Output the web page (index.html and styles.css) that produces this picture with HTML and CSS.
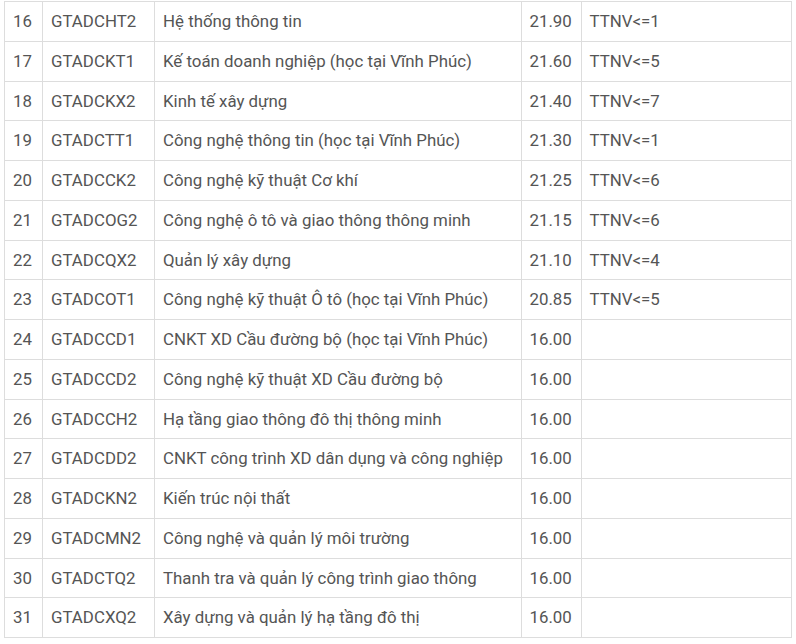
FILE: index.html
```html
<!DOCTYPE html>
<html lang="vi">
<head>
    <meta charset="UTF-8">
    <meta name="viewport" content="width=device-width, initial-scale=1.0">
    <title>Điểm chuẩn</title>
    <link rel="stylesheet" href="styles.css">
</head>
<body>
    <div class="wrap">
        <table class="scores">
            <colgroup>
                <col class="c-no">
                <col class="c-code">
                <col class="c-name">
                <col class="c-score">
                <col class="c-note">
            </colgroup>
            <tbody>
                <tr><td>16</td><td>GTADCHT2</td><td>Hệ thống thông tin</td><td>21.90</td><td>TTNV&lt;=1</td></tr>
                <tr><td>17</td><td>GTADCKT1</td><td>Kế toán doanh nghiệp (học tại Vĩnh Phúc)</td><td>21.60</td><td>TTNV&lt;=5</td></tr>
                <tr><td>18</td><td>GTADCKX2</td><td>Kinh tế xây dựng</td><td>21.40</td><td>TTNV&lt;=7</td></tr>
                <tr><td>19</td><td>GTADCTT1</td><td>Công nghệ thông tin (học tại Vĩnh Phúc)</td><td>21.30</td><td>TTNV&lt;=1</td></tr>
                <tr><td>20</td><td>GTADCCK2</td><td>Công nghệ kỹ thuật Cơ khí</td><td>21.25</td><td>TTNV&lt;=6</td></tr>
                <tr><td>21</td><td>GTADCOG2</td><td>Công nghệ ô tô và giao thông thông minh</td><td>21.15</td><td>TTNV&lt;=6</td></tr>
                <tr><td>22</td><td>GTADCQX2</td><td>Quản lý xây dựng</td><td>21.10</td><td>TTNV&lt;=4</td></tr>
                <tr><td>23</td><td>GTADCOT1</td><td>Công nghệ kỹ thuật Ô tô (học tại Vĩnh Phúc)</td><td>20.85</td><td>TTNV&lt;=5</td></tr>
                <tr><td>24</td><td>GTADCCD1</td><td>CNKT XD Cầu đường bộ (học tại Vĩnh Phúc)</td><td>16.00</td><td></td></tr>
                <tr><td>25</td><td>GTADCCD2</td><td>Công nghệ kỹ thuật XD Cầu đường bộ</td><td>16.00</td><td></td></tr>
                <tr><td>26</td><td>GTADCCH2</td><td>Hạ tầng giao thông đô thị thông minh</td><td>16.00</td><td></td></tr>
                <tr><td>27</td><td>GTADCDD2</td><td>CNKT công trình XD dân dụng và công nghiệp</td><td>16.00</td><td></td></tr>
                <tr><td>28</td><td>GTADCKN2</td><td>Kiến trúc nội thất</td><td>16.00</td><td></td></tr>
                <tr><td>29</td><td>GTADCMN2</td><td>Công nghệ và quản lý môi trường</td><td>16.00</td><td></td></tr>
                <tr><td>30</td><td>GTADCTQ2</td><td>Thanh tra và quản lý công trình giao thông</td><td>16.00</td><td></td></tr>
                <tr><td>31</td><td>GTADCXQ2</td><td>Xây dựng và quản lý hạ tầng đô thị</td><td>16.00</td><td></td></tr>
            </tbody>
        </table>
    </div>
</body>
</html>
```

FILE: styles.css
```css
body {
    margin: 0;
    background: #fff;
    font-family: Roboto, "Liberation Sans", sans-serif;
    color: #555;
}
.wrap {
    padding: 1px 0 0 4px;
}
.scores {
    width: 787px;
    table-layout: fixed;
    border-collapse: collapse;
    font-size: 16.85px;
}
.c-no { width: 38px; }
.c-code { width: 112px; }
.c-name { width: 366.5px; }
.c-score { width: 60px; }
.c-note { width: 210.5px; }
.scores td {
    border: 1px solid #ddd;
    padding: 8px 8px;
    line-height: 22.75px;
    white-space: nowrap;
    overflow: hidden;
}
```
